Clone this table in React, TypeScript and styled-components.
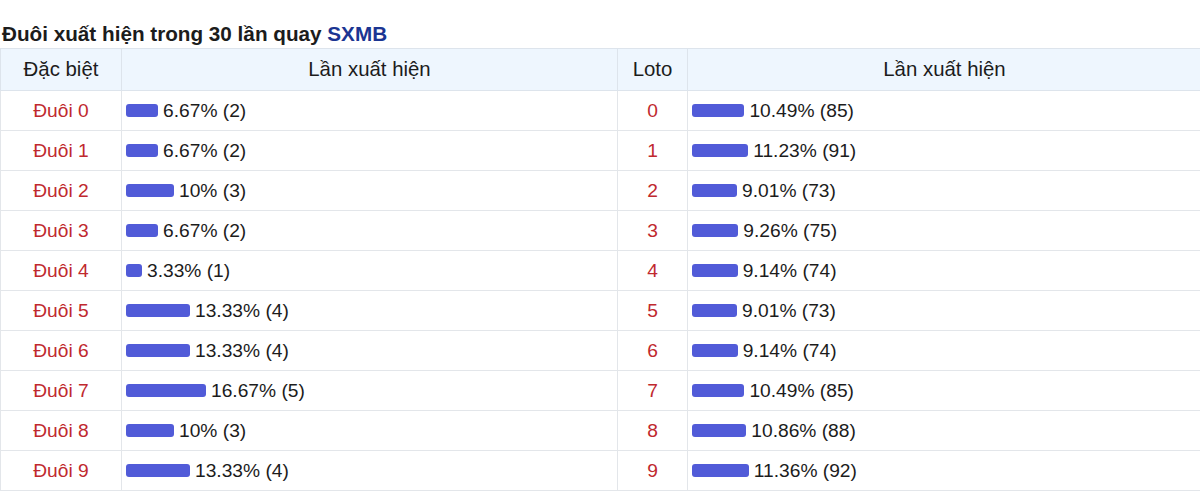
import React from "react";
import styled, { createGlobalStyle } from "styled-components";

const Global = createGlobalStyle`
  html, body { margin: 0; padding: 0; background: #fff; }
  body { font-family: "Liberation Sans", Arial, sans-serif; color: #222; }
`;

const Wrap = styled.div`
  width: 1198px;
`;

const Title = styled.h3`
  margin: 0;
  padding: 22px 0 0 2px;
  height: 26px;
  font-size: 20.7px;
  line-height: 24px;
  font-weight: 700;
  color: #1c1c1c;
`;

const Brand = styled.span`
  color: #1b3592;
`;

const Table = styled.table`
  width: 1198px;
  border-collapse: collapse;
  table-layout: fixed;
`;

const Th = styled.th<{ $w: number }>`
  width: ${(p) => p.$w}px;
  height: 41px;
  padding: 0;
  background: #eef6fe;
  border: 1px solid #dde4ec;
  font-size: 20.4px;
  font-weight: 400;
  color: #1c1c1c;
  text-align: center;
  vertical-align: middle;
`;

const Td = styled.td<{ $center?: boolean }>`
  height: 39px;
  padding: 0 ${(p) => (p.$center ? "0" : "4px")};
  border: 1px solid #e3e6ea;
  font-size: 19.2px;
  text-align: ${(p) => (p.$center ? "center" : "left")};
  vertical-align: middle;
`;

const Label = styled.span`
  color: #c0292e;
`;

const BarCell = styled.div`
  display: flex;
  align-items: center;
  gap: 5px;
  color: #1c1c1c;
`;

const Bar = styled.span`
  display: inline-block;
  height: 13px;
  border-radius: 3px;
  background: #515bd8;
  flex: none;
`;

const db = [
  ["6.67", 2],
  ["6.67", 2],
  ["10", 3],
  ["6.67", 2],
  ["3.33", 1],
  ["13.33", 4],
  ["13.33", 4],
  ["16.67", 5],
  ["10", 3],
  ["13.33", 4],
] as const;

const loto = [
  ["10.49", 85],
  ["11.23", 91],
  ["9.01", 73],
  ["9.26", 75],
  ["9.14", 74],
  ["9.01", 73],
  ["9.14", 74],
  ["10.49", 85],
  ["10.86", 88],
  ["11.36", 92],
] as const;

export default function App() {
  return (
    <Wrap>
      <Global />
      <Title>
        Đuôi xuất hiện trong 30 lần quay <Brand>SXMB</Brand>
      </Title>
      <Table>
        <thead>
          <tr>
            <Th $w={120}>Đặc biệt</Th>
            <Th $w={495}>Lần xuất hiện</Th>
            <Th $w={69}>Loto</Th>
            <Th $w={513}>Lần xuất hiện</Th>
          </tr>
        </thead>
        <tbody>
          {db.map((d, i) => (
            <tr key={i}>
              <Td $center>
                <Label>Đuôi {i}</Label>
              </Td>
              <Td>
                <BarCell>
                  <Bar style={{ width: `${parseFloat(d[0]) * 4.8}px` }} />
                  {d[0]}% ({d[1]})
                </BarCell>
              </Td>
              <Td $center>
                <Label>{i}</Label>
              </Td>
              <Td>
                <BarCell>
                  <Bar style={{ width: `${parseFloat(loto[i][0]) * 5}px` }} />
                  {loto[i][0]}% ({loto[i][1]})
                </BarCell>
              </Td>
            </tr>
          ))}
        </tbody>
      </Table>
    </Wrap>
  );
}
